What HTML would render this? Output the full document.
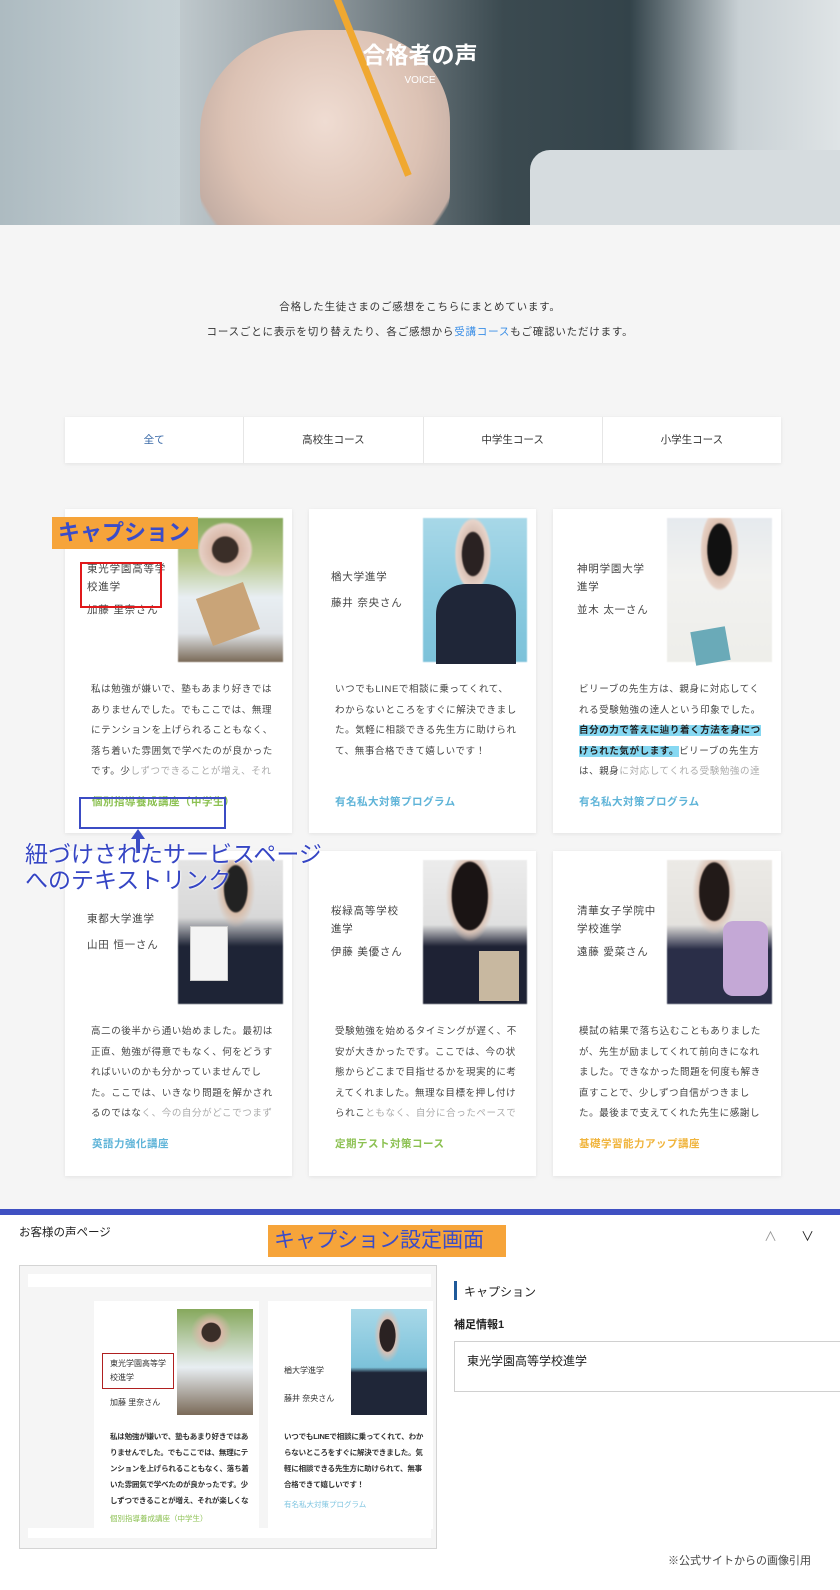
<!DOCTYPE html>
<html><head><meta charset="utf-8">
<style>
*{margin:0;padding:0;box-sizing:border-box}
body{width:840px;height:1590px;background:#f5f5f5;font-family:"Liberation Sans","Noto Sans CJK JP",sans-serif;color:#333;position:relative;overflow:hidden}
.abs{position:absolute}
.hero{left:0;top:0;width:840px;height:225px;background:linear-gradient(90deg,#b9c6cc 0%,#c9d2d6 18%,#8a9499 40%,#3b4a50 60%,#33434a 75%,#c8d0d4 88%,#dfe4e6 100%);overflow:hidden}
.card{background:#fff;box-shadow:0 1px 4px rgba(0,0,0,.08)}
.ph{position:absolute;filter:blur(0.5px)}
.t{font-size:10.5px;color:#444;line-height:18px;letter-spacing:.8px}
.body{font-size:9.5px;color:#444;line-height:20.5px;letter-spacing:.6px;height:102px;overflow:hidden}
.lk{font-size:10.5px;font-weight:bold;letter-spacing:.5px}
.ann{color:#3545c4;font-weight:bold}
.mb{font-size:7.5px;line-height:16px;font-weight:bold;color:#333;overflow:hidden;letter-spacing:-.2px}
</style></head><body>
<div class="abs hero">
 <div class="abs" style="left:200px;top:30px;width:250px;height:230px;border-radius:45% 40% 30% 30%;background:radial-gradient(ellipse at 50% 40%,#efdcd2,#dcc2b4 55%,#c4aea4 80%,transparent 82%)"></div>
 <div class="abs" style="left:330px;top:-10px;width:7px;height:200px;background:#f0a830;transform:rotate(-22deg);transform-origin:top"></div>
 <div class="abs" style="left:530px;top:150px;width:310px;height:80px;background:#d6dcdf;border-radius:20px 0 0 0"></div>
 <div class="abs" style="left:0;top:0;width:180px;height:225px;background:linear-gradient(90deg,#aab8be,#c9d4d8);opacity:.8"></div>
 <div class="abs" style="left:0;top:36px;width:840px;text-align:center;color:#fff;font-size:23px;font-weight:bold">合格者の声</div>
 <div class="abs" style="left:0;top:75px;width:840px;text-align:center;color:#fff;font-size:10px">VOICE</div>
</div>
<div class="abs" style="left:0;top:299px;width:840px;text-align:center;font-size:10.5px;letter-spacing:.8px;color:#333">合格した生徒さまのご感想をこちらにまとめています。</div>
<div class="abs" style="left:0;top:324px;width:840px;text-align:center;font-size:10.5px;letter-spacing:.8px;color:#333">コースごとに表示を切り替えたり、各ご感想から<span style="color:#3a8ee6">受講コース</span>もご確認いただけます。</div>
<div class="abs card" style="left:65px;top:417px;width:716px;height:46px;display:flex;font-size:10.5px">
 <div style="flex:1;text-align:center;line-height:46px;color:#3a6aa8;border-right:1px solid #e6e6e6">全て</div>
 <div style="flex:1;text-align:center;line-height:46px;border-right:1px solid #e6e6e6">高校生コース</div>
 <div style="flex:1;text-align:center;line-height:46px;border-right:1px solid #e6e6e6">中学生コース</div>
 <div style="flex:1;text-align:center;line-height:46px">小学生コース</div>
</div>

<!-- row1 -->
<div class="abs card" style="left:65px;top:509px;width:227px;height:324px">
 <div class="ph" style="left:113px;top:9px;width:105px;height:144px;background:radial-gradient(circle at 45% 22%,#3a2e28 10%,#d9b8a8 11%,#e6cfc4 20%,transparent 22%),linear-gradient(180deg,#86a85c,#b8c98e 30%,#e8eef2 55%,#e0e4e8 80%,#7a6a58)"></div>
 <div class="abs" style="left:138px;top:80px;width:50px;height:50px;background:#c9a478;transform:rotate(-20deg)"></div>
 <div class="abs t" style="left:22px;top:51px;width:85px">東光学園高等学<br>校進学</div>
 <div class="abs t" style="left:22px;top:92px">加藤 里奈さん</div>
 <div class="abs body" style="left:26px;top:171px;width:182px">私は勉強が嫌いで、塾もあまり好きではありませんでした。でもここでは、無理にテンションを上げられることもなく、落ち着いた雰囲気で学べたのが良かったです。少<span style="color:#aaa">しずつできることが増え、それが楽しくなってきました。</span></div>
 <div class="abs lk" style="left:27px;top:285px;color:#8cc152">個別指導養成講座（中学生）</div>
</div>
<div class="abs card" style="left:309px;top:509px;width:227px;height:324px">
 <div class="ph" style="left:114px;top:9px;width:104px;height:144px;background:radial-gradient(ellipse at 48% 25%,#2a2222 14%,#d8c0b4 15%,#e8d4ca 22%,transparent 24%),linear-gradient(180deg,#a8d8e8,#8ccbe0 50%,#7cc2da)"></div>
 <div class="abs" style="left:127px;top:75px;width:80px;height:80px;background:#1f2638;border-radius:30px 30px 0 0"></div>
 <div class="abs t" style="left:22px;top:59px">楢大学進学</div>
 <div class="abs t" style="left:22px;top:85px">藤井 奈央さん</div>
 <div class="abs body" style="left:26px;top:171px;width:182px">いつでもLINEで相談に乗ってくれて、わからないところをすぐに解決できました。気軽に相談できる先生方に助けられて、無事合格できて嬉しいです！</div>
 <div class="abs lk" style="left:26px;top:285px;color:#5fb4d8">有名私大対策プログラム</div>
</div>
<div class="abs card" style="left:553px;top:509px;width:228px;height:324px">
 <div class="ph" style="left:114px;top:9px;width:105px;height:144px;background:radial-gradient(ellipse at 50% 22%,#111 16%,#dcc0b0 17%,#e6d0c4 24%,transparent 26%),linear-gradient(180deg,#e6eaee,#f2f2f0 40%,#eeeeea)"></div>
 <div class="abs" style="left:140px;top:120px;width:35px;height:34px;background:#6aaab8;transform:rotate(-10deg)"></div>
 <div class="abs t" style="left:24px;top:51px">神明学園大学<br>進学</div>
 <div class="abs t" style="left:24px;top:92px">並木 太一さん</div>
 <div class="abs body" style="left:26px;top:171px;width:184px">ビリーブの先生方は、親身に対応してくれる受験勉強の達人という印象でした。<b style="background:#86d8f2;color:#222">自分の力で答えに辿り着く方法を身につけられた気がします。</b>ビリーブの先生方は、親身<span style="color:#aaa">に対応してくれる受験勉強の達人という印象でした。</span></div>
 <div class="abs lk" style="left:26px;top:285px;color:#5fb4d8">有名私大対策プログラム</div>
</div>
<!-- row2 -->
<div class="abs card" style="left:65px;top:851px;width:227px;height:325px">
 <div class="ph" style="left:113px;top:9px;width:105px;height:144px;background:radial-gradient(ellipse at 55% 20%,#222 14%,#d8bca8 15%,transparent 24%),linear-gradient(180deg,#e4e4e4,#d8d8d8 40%,#1e2436 60%,#1e2436)"></div>
 <div class="abs" style="left:125px;top:75px;width:38px;height:55px;background:#f4f4f4;border:1px solid #ccc"></div>
 <div class="abs t" style="left:22px;top:59px">東都大学進学</div>
 <div class="abs t" style="left:22px;top:85px">山田 恒一さん</div>
 <div class="abs body" style="left:26px;top:171px;width:182px">高二の後半から通い始めました。最初は正直、勉強が得意でもなく、何をどうすればいいのかも分かっていませんでした。ここでは、いきなり問題を解かされるのではな<span style="color:#aaa">く、今の自分がどこでつまずいているのか</span></div>
 <div class="abs lk" style="left:27px;top:285px;color:#5fb4d8">英語力強化講座</div>
</div>
<div class="abs card" style="left:309px;top:851px;width:227px;height:325px">
 <div class="ph" style="left:114px;top:9px;width:104px;height:144px;background:radial-gradient(ellipse at 45% 25%,#1a1414 22%,#dcc4b6 23%,transparent 30%),linear-gradient(180deg,#ececec,#e0e0e0 45%,#1e2234 60%,#1e2234)"></div>
 <div class="abs" style="left:170px;top:100px;width:40px;height:50px;background:#c8b8a0"></div>
 <div class="abs t" style="left:22px;top:51px">桜緑高等学校<br>進学</div>
 <div class="abs t" style="left:22px;top:92px">伊藤 美優さん</div>
 <div class="abs body" style="left:26px;top:171px;width:184px">受験勉強を始めるタイミングが遅く、不安が大きかったです。ここでは、今の状態からどこまで目指せるかを現実的に考えてくれました。無理な目標を押し付けられこ<span style="color:#aaa">ともなく、自分に合ったペースで進められ</span></div>
 <div class="abs lk" style="left:26px;top:285px;color:#8cc152">定期テスト対策コース</div>
</div>
<div class="abs card" style="left:553px;top:851px;width:228px;height:325px">
 <div class="ph" style="left:114px;top:9px;width:105px;height:144px;background:radial-gradient(ellipse at 45% 22%,#221a18 18%,#dcc4b6 19%,transparent 27%),linear-gradient(180deg,#eceae6,#e4e2de 45%,#2a2e48 62%,#2a2e48)"></div>
 <div class="abs" style="left:170px;top:70px;width:45px;height:75px;background:#c4a8d6;border-radius:10px"></div>
 <div class="abs t" style="left:24px;top:51px">清華女子学院中<br>学校進学</div>
 <div class="abs t" style="left:24px;top:92px">遠藤 愛菜さん</div>
 <div class="abs body" style="left:26px;top:171px;width:184px">模試の結果で落ち込むこともありましたが、先生が励ましてくれて前向きになれました。できなかった問題を何度も解き直すことで、少しずつ自信がつきました。最後まで支えてくれた先生に感謝しています。</div>
 <div class="abs lk" style="left:26px;top:285px;color:#f0b43c">基礎学習能力アップ講座</div>
</div>

<!-- annotations -->
<div class="abs ann" style="left:52px;top:517px;width:146px;height:32px;background:#f6a43a;font-size:22px;line-height:32px;padding-left:6px;color:#3a4cc8">キャプション</div>
<div class="abs" style="left:80px;top:562px;width:82px;height:46px;border:2px solid #e0191b"></div>
<div class="abs" style="left:79px;top:797px;width:147px;height:32px;border:2px solid #3b4cc4"></div>
<div class="abs" style="width:0;height:0;border-left:7px solid transparent;border-right:7px solid transparent;border-bottom:10px solid #3b4cc4;left:131px;top:829px"></div>
<div class="abs" style="left:136px;top:838px;width:4px;height:15px;background:#3b4cc4"></div>
<div class="abs ann" style="left:25px;top:841px;font-size:23px;line-height:26px;font-weight:normal;color:#3545c4;text-shadow:0 0 2px #fff,0 0 2px #fff">紐づけされたサービスページ<br>へのテキストリンク</div>

<!-- bottom -->
<div class="abs" style="left:0;top:1209px;width:840px;height:6px;background:#3f50c2"></div>
<div class="abs" style="left:0;top:1215px;width:840px;height:375px;background:#fff"></div>
<div class="abs" style="left:19px;top:1224px;font-size:11.5px;color:#222">お客様の声ページ</div>
<div class="abs ann" style="left:268px;top:1225px;width:238px;height:32px;background:#f6a43a;font-size:21px;line-height:32px;padding-left:6px;color:#3a4cc8;font-weight:normal">キャプション設定画面</div>
<div class="abs" style="left:764px;top:1226px;font-size:13px;color:#999">&#x2227;</div>
<div class="abs" style="left:801px;top:1226px;font-size:13px;color:#222">&#x2228;</div>
<div class="abs" style="left:19px;top:1265px;width:418px;height:284px;background:#f5f5f5;border:1px solid #d4d4d4">
 <div class="abs" style="left:8px;top:8px;width:403px;height:13px;background:#fff"></div>
 <div class="abs" style="left:8px;top:262px;width:403px;height:10px;background:#fff"></div>
 <div class="abs" style="left:74px;top:35px;width:165px;height:228px;background:#fff">
  <div class="abs" style="left:83px;top:8px;width:76px;height:106px;background:radial-gradient(circle at 45% 22%,#3a2e28 10%,#d9b8a8 11%,transparent 22%),linear-gradient(180deg,#86a85c,#e8eef2 55%,#7a6a58)"></div>
  <div class="abs" style="left:8px;top:52px;width:72px;height:36px;border:1.5px solid #b02020"></div>
  <div class="abs" style="left:16px;top:56px;font-size:8px;line-height:14px">東光学園高等学<br>校進学</div>
  <div class="abs" style="left:16px;top:96px;font-size:8px">加藤 里奈さん</div>
  <div class="abs mb" style="left:16px;top:128px;width:142px;height:80px">私は勉強が嫌いで、塾もあまり好きではありませんでした。でもここでは、無理にテンションを上げられることもなく、落ち着いた雰囲気で学べたのが良かったです。少しずつできることが増え、それが楽しくなってきまし</div>
  <div class="abs" style="left:16px;top:212px;font-size:7.5px;color:#8cc152">個別指導養成講座（中学生）</div>
 </div>
 <div class="abs" style="left:248px;top:35px;width:165px;height:228px;background:#fff">
  <div class="abs" style="left:83px;top:8px;width:76px;height:106px;background:radial-gradient(ellipse at 48% 25%,#2a2222 14%,#d8c0b4 15%,transparent 24%),linear-gradient(180deg,#a8d8e8,#7cc2da 55%,#1f2638 60%,#1f2638)"></div>
  <div class="abs" style="left:16px;top:64px;font-size:8px">楢大学進学</div>
  <div class="abs" style="left:16px;top:92px;font-size:8px">藤井 奈央さん</div>
  <div class="abs mb" style="left:16px;top:128px;width:142px;height:64px">いつでもLINEで相談に乗ってくれて、わからないところをすぐに解決できました。気軽に相談できる先生方に助けられて、無事合格できて嬉しいです！</div>
  <div class="abs" style="left:16px;top:198px;font-size:7.5px;color:#7ec4e0">有名私大対策プログラム</div>
 </div>
</div>
<div class="abs" style="left:454px;top:1281px;width:3px;height:19px;background:#1f5a9a"></div>
<div class="abs" style="left:464px;top:1283px;font-size:12px;color:#222">キャプション</div>
<div class="abs" style="left:454px;top:1316px;font-size:11px;font-weight:bold;color:#222">補足情報1</div>
<div class="abs" style="left:454px;top:1341px;width:390px;height:51px;border:1px solid #d0d0d0;background:#fff"></div>
<div class="abs" style="left:467px;top:1352px;font-size:12px;color:#222">東光学園高等学校進学</div>
<div class="abs" style="left:668px;top:1552px;font-size:11px;color:#444">※公式サイトからの画像引用</div>
</body></html>
